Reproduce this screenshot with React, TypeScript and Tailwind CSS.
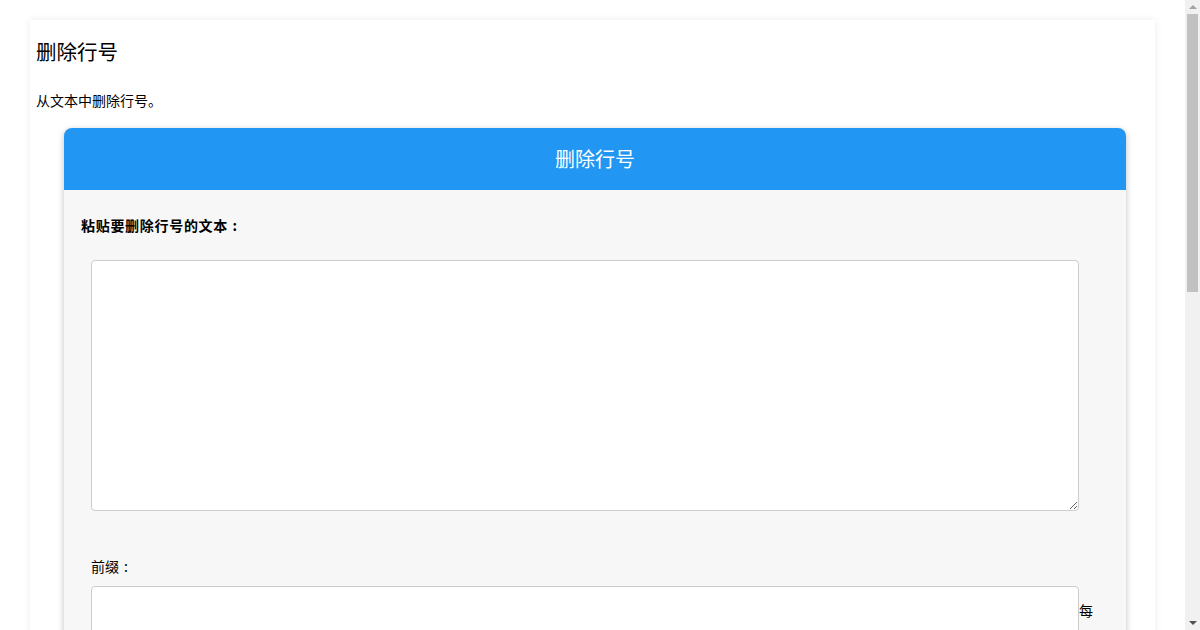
import React from 'react';

const font = { fontFamily: '"Noto Sans CJK SC", "Noto Sans", sans-serif' };

// full-width colon with the dots centred in its cell, like the reference page's font
function Colon() {
  return <span className="inline-block w-[1em] text-center">:</span>;
}

function RemoveLineNumbers() {
  return (
    <div className="ml-[34px] w-[1062px] rounded-lg bg-[#f7f7f7] shadow-[0_2px_6px_rgba(0,0,0,0.25)]">
      <div className="flex h-[62px] items-center justify-center rounded-t-lg bg-[#2196f3] text-[20px] text-white">
        删除行号
      </div>
      <div className="pl-[17px] pt-[25px] pb-10">
        <label className="block text-[14px] font-bold leading-5 tracking-[0.7px] text-black">
          粘贴要删除行号的文本<Colon />
        </label>
        <div className="pl-[10px] pt-[25px]">
          <textarea className="block h-[251px] w-[988px] resize-y rounded border border-[#ccc] bg-white" />
        </div>
        <div className="pl-[10px] pt-[45px]">
          <label className="block text-[14px] leading-5 text-black">
            前缀<Colon />
          </label>
          <div className="mt-[10px] text-[14px]">
            <input type="text" className="inline-block h-[50px] w-[988px] rounded border border-[#ccc] bg-white align-top" />
            <span className="inline-block pt-[14px]">每</span>
          </div>
        </div>
      </div>
    </div>
  );
}

function Scrollbar() {
  return (
    <div className="fixed right-0 top-0 flex h-[630px] w-[15px] flex-col items-center bg-[#f1f1f1]">
      <div className="mt-[5px] h-0 w-0 border-x-[4px] border-b-[4px] border-x-transparent border-b-[#a3a3a3]" />
      <div className="mt-[5px] h-[278px] w-[11px] bg-[#c1c1c1]" />
      <div className="mt-auto mb-[5px] h-0 w-0 border-x-[4px] border-t-[4px] border-x-transparent border-t-[#505050]" />
    </div>
  );
}

export default function App() {
  return (
    <div className="min-h-[900px] bg-white pr-[15px]" style={font}>
      <div className="pt-5">
        <div className="ml-[30px] w-[1125px] bg-white pb-8 shadow-[0_0_8px_rgba(0,0,0,0.08)]">
          <h2 className="pl-[6px] pt-[17px] text-[20.5px] leading-7 text-black">删除行号</h2>
          <p className="mt-[25px] pl-[6px] text-[14px] leading-5 text-black">从文本中删除行号。</p>
          <div className="mt-[18px]">
            <RemoveLineNumbers />
          </div>
        </div>
      </div>
      <Scrollbar />
    </div>
  );
}
